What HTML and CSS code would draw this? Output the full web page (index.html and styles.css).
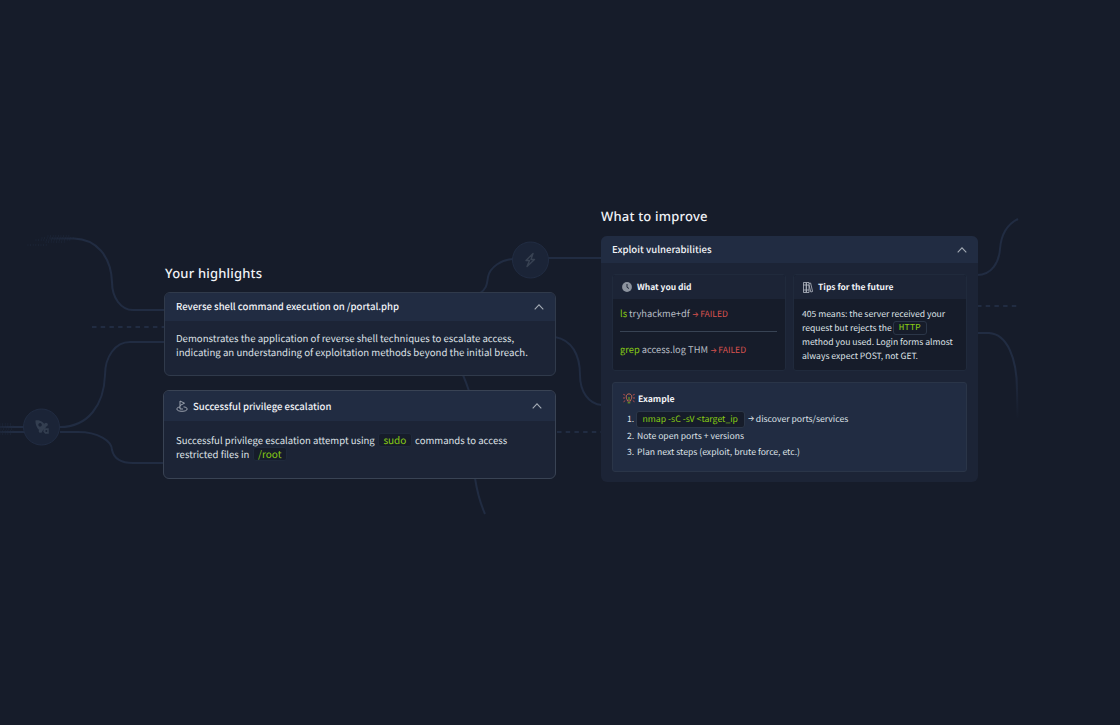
FILE: index.html
```html
<!DOCTYPE html>
<html lang="en">
<head>
    <meta charset="UTF-8">
    <meta name="viewport" content="width=device-width, initial-scale=1.0">
    <title>Your highlights</title>
    <link rel="stylesheet" href="styles.css">
</head>
<body>
    <!-- Connector lines behind the cards -->
    <svg class="lines" width="1120" height="725" viewBox="0 0 1120 725" fill="none">
        <defs>
            <linearGradient id="fadeLeft" gradientUnits="userSpaceOnUse" x1="35" y1="0" x2="80" y2="0">
                <stop offset="0" stop-color="#212c42" stop-opacity="0"/>
                <stop offset="1" stop-color="#212c42"/>
            </linearGradient>
            <linearGradient id="fadeEdge" gradientUnits="userSpaceOnUse" x1="-5" y1="0" x2="14" y2="0">
                <stop offset="0" stop-color="#212c42" stop-opacity="0.4"/>
                <stop offset="1" stop-color="#212c42"/>
            </linearGradient>
            <linearGradient id="fadeDown" gradientUnits="userSpaceOnUse" x1="0" y1="370" x2="0" y2="420">
                <stop offset="0" stop-color="#212c42"/>
                <stop offset="1" stop-color="#212c42" stop-opacity="0"/>
            </linearGradient>
        </defs>
        <!-- Speckles where the lines fade out -->
        <g stroke="#212c42" stroke-linecap="round" stroke-dasharray="0 2.600">
            <path d="M42 238H74M36 240H72M46 242H66M48 236H70M28 245H48"/>
            <path d="M0 424H12M0 426H14M1 429H13M0 431H14M0 434H11"/>
        </g>
        <g stroke="#212c42" stroke-width="2">
            <path stroke="url(#fadeLeft)" d="M50 238.500H74C96 239 111 256 112 282C112 298 121 310 133 310H166"/>
            <path d="M60 427C88 427 104 405 105 375C105 357 115 342 130 342H166"/>
            <path d="M60 432H78C98 432 112 441 112 450C114 459 122 463 133 463H166"/>
            <path stroke="url(#fadeEdge)" d="M0 427L24 427.1M0 432L24 432.1"/>
            <path d="M479 294C487 289 487 284 488 277C490 267 502 259 514 259M548 258H602"/>
            <path d="M463 375Q466 382 469 391M475 478Q478 498 485 514"/>
            <path d="M555 337C572 340 580 355 580 375C580 391 588 404 602 405"/>
            <path d="M977 275C992 275 999 262 1000 249C1001 236 1006 225 1018 219"/>
            <path stroke="url(#fadeDown)" d="M977 333H989C1007 334 1017 358 1017 390L1017.500 418"/>
            <path stroke-dasharray="4.500 4.200" d="M92 327H166M557 432H602M977 306H1018"/>
        </g>
        <g fill="#1b2437" stroke="#212c42">
            <circle cx="41.500" cy="427" r="18"/>
            <circle cx="530.500" cy="260" r="18"/>
        </g>
        <g transform="translate(34.500 419.500) scale(.92)" fill="#333e50">
            <path fill-rule="evenodd" d="M1 1C6 0 10 3 13 8L8 13C3 11 1 6 1 1ZM6 3.800A1.900 1.900 0 1 0 6.100 3.800Z"/>
            <circle cx="12.500" cy="5.500" r="2"/>
            <circle cx="6.500" cy="12.500" r="2"/>
            <path fill-rule="evenodd" d="M10.500 9.500H15.500V15.500H11.500L9.500 13ZM12 11.500V13.500H13.800V11.500Z"/>
        </g>
        <path stroke="#384253" stroke-width="1.400" stroke-linejoin="round" d="M533 253.500L526 260.500H529.500L527 266.500L534.500 259.500H531Z"/>
    </svg>

    <div class="page">
        <section class="highlights">
            <h2 class="title">Your highlights</h2>

            <div class="card card-shell">
                <div class="card-header">
                    <span class="card-title">Reverse shell command execution on /portal.php</span>
                    <svg class="chevron" viewBox="0 0 10 6"><path d="M.7 5.300L5 .9L9.300 5.300"/></svg>
                </div>
                <div class="card-body">
                    <p>Demonstrates the application of reverse shell techniques to escalate access,<br>indicating an understanding of exploitation methods beyond the initial breach.</p>
                </div>
            </div>

            <div class="card card-escalation">
                <div class="card-header">
                    <svg class="icon icon-flag" viewBox="0 0 12 12">
                        <path d="M4 9V1L8.500 3.200L4 5.500M4 7C2 7.200.8 8 .8 9C.8 10.400 3 11.300 6 11.300S11.200 10.400 11.200 9C11.200 7.800 9.700 7 7.500 6.900M4 9H7"/>
                    </svg>
                    <span class="card-title">Successful privilege escalation</span>
                    <svg class="chevron" viewBox="0 0 10 6"><path d="M.7 5.300L5 .9L9.300 5.300"/></svg>
                </div>
                <div class="card-body">
                    <p>Successful privilege escalation attempt using <code class="code code-inline">sudo</code> commands to access<br>restricted files in <code class="code code-inline">/root</code></p>
                </div>
            </div>
        </section>

        <section class="improve">
            <h2 class="title">What to improve</h2>

            <div class="panel">
                <div class="panel-header">
                    <span>Exploit vulnerabilities</span>
                    <svg class="chevron" viewBox="0 0 10 6"><path d="M.7 5.300L5 .9L9.300 5.300"/></svg>
                </div>
                <div class="panel-body">
                    <div class="boxes">
                        <div class="box">
                            <div class="box-header">
                                <svg class="icon icon-clock" viewBox="0 0 10 10"><circle cx="5" cy="5" r="4.900"/><path d="M5 2V5.300L7 6.500"/></svg>
                                <span>What you did</span>
                            </div>
                            <div class="commands">
                                <div class="command"><b>ls</b> tryhackme+df <em><span class="arrow">→</span> FAILED</em></div>
                                <div class="command command-grep"><b>grep</b> access.log THM <em><span class="arrow">→</span> FAILED</em></div>
                            </div>
                        </div>
                        <div class="box">
                            <div class="box-header">
                                <svg class="icon icon-books" viewBox="0 0 10 11">
                                    <path d="M.5.500H3.300V10.500H.5ZM3.300.500H6V10.500H3.300ZM.5 3H6M.5 8H6M6 1.500L7.600 1L9.600 9.500L7.800 10L6 3"/>
                                </svg>
                                <span>Tips for the future</span>
                            </div>
                            <p class="tips">405 means: the server received your<br>request but rejects the<code class="code code-http">HTTP</code><br>method you used. Login forms almost<br>always expect POST, not GET.</p>
                        </div>
                    </div>
                    <div class="example">
                        <div class="example-title">
                            <svg class="icon icon-bulb" viewBox="0 0 12 11">
                                <path class="rays" d="M.3 1.300L2.200 2.200M0 5H2M.5 8.800L2.200 7.600M11.700 1.300L9.800 2.200M12 5H10M11.500 8.800L9.800 7.600"/>
                                <path class="glass" d="M4.500 8C4.500 6.500 3.200 6 3.200 4C3.200 2 4.400.900 6 .900S8.800 2 8.800 4C8.800 6 7.500 6.500 7.500 8Z"/>
                                <path class="base" d="M4.700 9.800H7.300M6 4V7"/>
                            </svg>
                            <span>Example</span>
                        </div>
                        <ol class="steps">
                            <li><span class="num">1.</span><code class="code code-nmap">nmap -sC -sV &lt;target_ip</code><span class="arrow">→</span>&nbsp;discover ports/services</li>
                            <li><span class="num">2.</span>Note open ports + versions</li>
                            <li><span class="num">3.</span>Plan next steps (exploit, brute force, etc.)</li>
                        </ol>
                    </div>
                </div>
            </div>
        </section>
    </div>
</body>
</html>
```
FILE: styles.css
```css
* {
    box-sizing: border-box;
}

body {
    margin: 0;
    height: 725px;
    overflow: hidden;
    background-color: #161c2a;
    color: #dfe2e7;
    font-family: "Noto Sans CJK SC", "Noto Sans", sans-serif;
    text-rendering: geometricPrecision;
}

h2, p, ol {
    margin: 0;
    padding: 0;
}

.lines {
    position: absolute;
    top: 0;
    left: 0;
}

.page {
    position: relative;
    display: flex;
    align-items: flex-start;
    gap: 45px;
    padding: 206px 0 0 163px;
}

.highlights {
    width: 392.5px;
    padding-top: 57px;
}

.improve {
    width: 377px;
    margin-left: 0.5px;
}

.title {
    height: 30px;
    font-family: "Noto Sans", sans-serif;
    font-size: 13px;
    font-weight: 500;
    line-height: 20px;
    letter-spacing: 0.2px;
    color: #f1f3f7;
}

.highlights .title {
    height: 29px;
    padding-left: 2px;
}

/* Highlight cards */
.card {
    border: 1px solid #303a4b;
    border-radius: 6px;
    background-color: #1c2436;
    overflow: hidden;
}

.card-shell {
    height: 84px;
    margin-left: 1px;
}

.card-escalation {
    height: 89px;
    margin-top: 14px;
    border-color: #394354;
}

.card-header {
    display: flex;
    align-items: center;
    height: 28px;
    padding: 0 11px;
    background-color: #212c42;
    line-height: 16px;
}

.card-shell .card-title {
    margin-top: -2px;
}

.card-escalation .card-header {
    height: 30px;
    padding: 0 13px 0 12px;
}

.card-title {
    flex: 1;
    font-size: 9.55px;
    font-weight: 500;
    color: #f1f3f7;
}

.card-body {
    padding: 10px 11px 0;
    font-size: 9.65px;
    line-height: 14px;
    white-space: nowrap;
}

.card-escalation .card-body {
    padding: 12px 12px 0;
    font-size: 9.55px;
}

.chevron {
    width: 10px;
    height: 6px;
    fill: none;
    stroke: #a4abb5;
    stroke-width: 1.1;
}

.icon {
    flex: none;
    fill: none;
    stroke: #b7bdc6;
    stroke-width: 0.8;
}

.icon-flag {
    width: 12px;
    height: 12px;
    margin-right: 5px;
}

.code {
    display: inline-block;
    height: 14px;
    padding: 0 5px;
    border: 1px solid #1f293b;
    border-radius: 3px;
    background-color: #161c2a;
    color: #88cc14;
    font-family: inherit;
    font-size: 10px;
    line-height: 12px;
    vertical-align: top;
}

.code-inline {
    margin: 0 1px;
    padding: 0 4.5px;
}

/* What to improve */
.panel {
    height: 246px;
    border-radius: 6px;
    background-color: #1c2436;
    overflow: hidden;
}

.panel-header {
    display: flex;
    justify-content: space-between;
    align-items: center;
    height: 27px;
    padding: 0 11px;
    background-color: #212c42;
    font-size: 9.6px;
    font-weight: 500;
    line-height: 16px;
    color: #f1f3f7;
}

.panel-header span {
    margin-top: -1px;
}

.panel-body {
    padding: 11px;
}

.boxes {
    display: grid;
    grid-template-columns: 1fr 1fr;
    gap: 7px;
}

.box {
    height: 97px;
    border: 1px solid #202a3c;
    border-radius: 3px;
    background-color: #161c2a;
    overflow: hidden;
    white-space: nowrap;
}

.box-header {
    display: flex;
    align-items: center;
    height: 24px;
    padding: 0 9px;
    background-color: #1c2436;
    font-size: 8.5px;
    font-weight: 700;
    line-height: 14px;
    color: #f1f3f7;
}

.box-header span {
    margin-top: -1px;
}

.icon-clock {
    width: 10px;
    height: 10px;
    margin-right: 5px;
    fill: #8d949f;
    stroke: none;
}

.icon-clock path {
    fill: none;
    stroke: #1c2436;
    stroke-width: 1;
}

.icon-books {
    width: 10px;
    height: 11px;
    margin-right: 5px;
}

.commands {
    padding: 0 8px 0 7px;
}

.command {
    height: 32px;
    padding-top: 7px;
    font-size: 9.3px;
    line-height: 14px;
    color: #b6bcc5;
}

.command-grep {
    padding-top: 10px;
    border-top: 1px solid #384354;
}

.command b {
    font-weight: 400;
    color: #88cc14;
}

.command em {
    font-style: normal;
    font-size: 8.6px;
    color: #d9534f;
}

.arrow {
    font-family: "Inter", sans-serif;
    font-size: 7.5px;
    letter-spacing: -0.8px;
}

.tips {
    padding: 8px;
    font-size: 8.6px;
    line-height: 14px;
}

.code-http {
    margin-left: 1px;
    border-color: #2b3648;
    font-family: "Liberation Mono", monospace;
    font-size: 9.2px;
}

.example {
    height: 90px;
    margin-top: 11px;
    padding: 8px 11px;
    border: 1px solid #2a3548;
    border-radius: 3px;
    background-color: #212c42;
}

.example-title {
    display: flex;
    align-items: center;
    height: 15px;
    font-size: 8.7px;
    font-weight: 700;
    color: #f1f3f7;
}

.icon-bulb {
    width: 12px;
    height: 11px;
    margin: 0 3px 0 -1px;
}

.icon-bulb .rays {
    stroke: #d9534f;
}

.icon-bulb .glass {
    stroke: #e07a58;
}

.icon-bulb .base {
    stroke: #88cc14;
}

.steps {
    padding: 5px 0 0 3px;
    list-style: none;
    font-size: 8.65px;
    line-height: 16px;
}

.steps li {
    display: flex;
    align-items: center;
    height: 16.5px;
}

.num {
    width: 10px;
}

.code-nmap {
    height: 17px;
    margin: 0 3px 0 -1px;
    padding: 0 5.5px;
    border-color: #2b3648;
    font-size: 8.7px;
    line-height: 14px;
}
```
